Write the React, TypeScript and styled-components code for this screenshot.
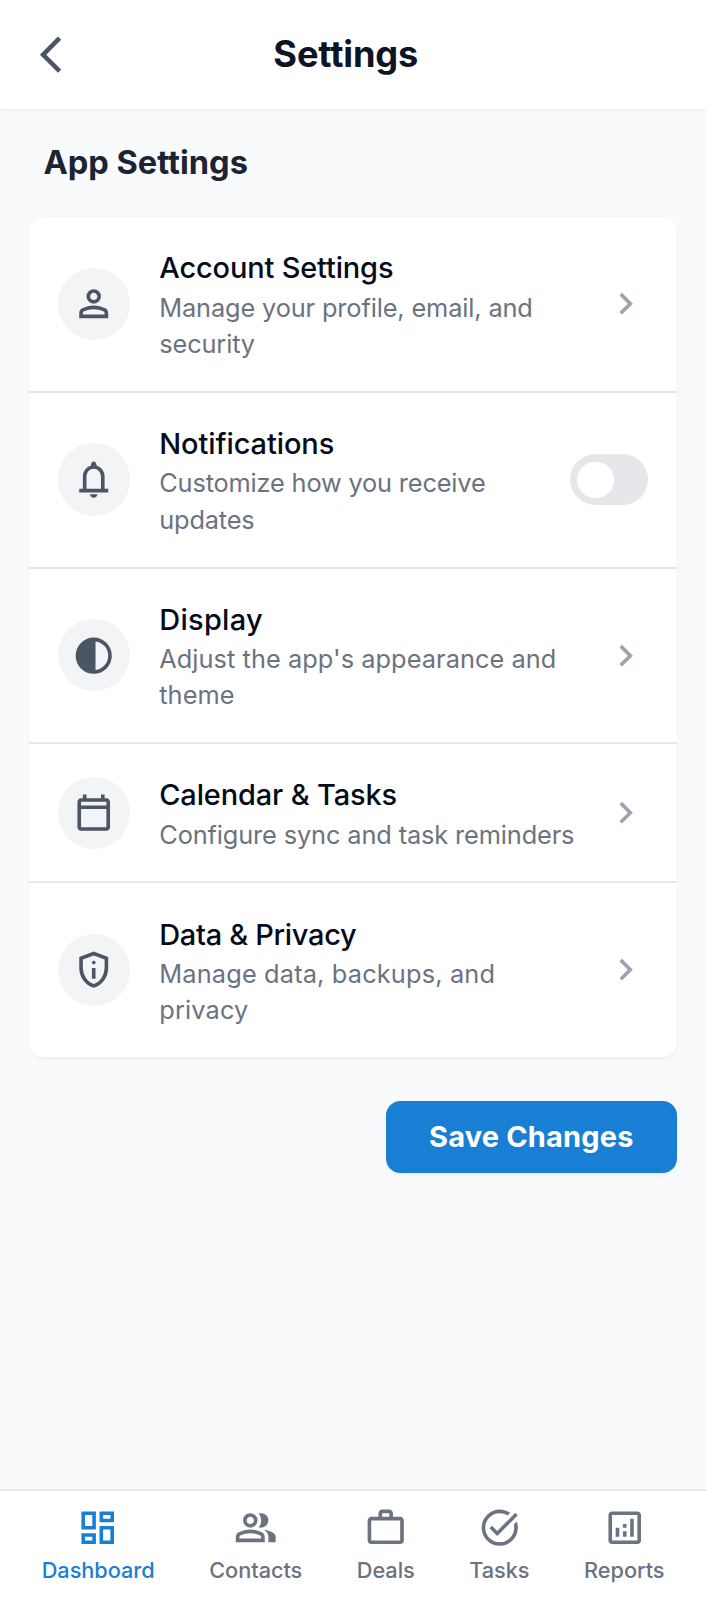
import React from "react";
import styled, { createGlobalStyle } from "styled-components";

const color = {
  primary: "#197fd4",
  page: "#f9fafb",
  surface: "#ffffff",
  line: "#e5e7eb",
  chip: "#f3f4f6",
  heading: "#0d1424",
  subheading: "#1a2433",
  rowTitle: "#060b1a",
  icon: "#4b5563",
  muted: "#6b7280",
  faint: "#9ca3af",
};

const GlobalStyle = createGlobalStyle`
  html { font-size: 28.964px; }
  *, *::before, *::after { box-sizing: border-box; }
  body {
    margin: 0;
    background: ${color.page};
    font-family: Inter, "Liberation Sans", sans-serif;
    font-optical-sizing: none;
  }
  h1, h2, p { margin: 0; }
  button { border: 0; padding: 0; background: none; font: inherit; cursor: pointer; }
`;

const icons = {
  back: "M640-80 240-480l400-400 71 71-329 329 329 329-71 71Z",
  chevron: "M504-480 320-664l56-56 240 240-240 240-56-56 184-184Z",
  person:
    "M480-480q-66 0-113-47t-47-113q0-66 47-113t113-47q66 0 113 47t47 113q0 66-47 113t-113 47ZM160-160v-112q0-34 17.5-62.5T224-378q62-31 126-46.5T480-440q66 0 130 15.5T736-378q29 15 46.5 43.5T800-272v112H160Zm80-80h480v-32q0-11-5.5-20T700-306q-54-27-109-40.5T480-360q-56 0-111 13.5T260-306q-9 5-14.5 14t-5.5 20v32Zm240-320q33 0 56.5-23.5T560-640q0-33-23.5-56.5T480-720q-33 0-56.5 23.5T400-640q0 33 23.5 56.5T480-560Z",
  bell:
    "M160-200v-80h80v-280q0-83 50-147.5T420-792v-28q0-25 17.5-42.5T480-880q25 0 42.5 17.5T540-820v28q80 20 130 84.5T720-560v280h80v80H160Zm320 120q-33 0-56.5-23.5T400-160h160q0 33-23.5 56.5T480-80ZM320-280h320v-280q0-66-47-113t-113-47q-66 0-113 47t-47 113v280Z",
  contrast:
    "M480-80q-83 0-156-31.5T197-197q-54-54-85.5-127T80-480q0-83 31.5-156T197-763q54-54 127-85.5T480-880q83 0 156 31.5T763-763q54 54 85.5 127T880-480q0 83-31.5 156T763-197q-54 54-127 85.5T480-80Zm40-83q119-15 199.5-104.5T800-480q0-123-80.5-212.5T520-797v634Z",
  calendar:
    "M200-80q-33 0-56.5-23.5T120-160v-560q0-33 23.5-56.5T200-800h40v-80h80v80h320v-80h80v80h40q33 0 56.5 23.5T840-720v560q0 33-23.5 56.5T760-80H200Zm0-80h560v-400H200v400Zm0-480h560v-80H200v80Z",
  shield:
    "M440-280h80v-240h-80v240Zm68.5-331.5Q520-623 520-640t-11.5-28.5Q497-680 480-680t-28.5 11.5Q440-657 440-640t11.5 28.5Q463-600 480-600t28.5-11.5ZM480-80q-139-35-229.5-159.5T160-516v-244l320-120 320 120v244q0 152-90.5 276.5T480-80Zm0-84q104-33 172-132t68-220v-189l-240-90-240 90v189q0 121 68 220t172 132Z",
  dashboard:
    "M520-600v-240h320v240H520ZM120-440v-400h320v400H120Zm400 320v-400h320v400H520Zm-400 0v-240h320v240H120Zm80-400h160v-240H200v240Zm400 320h160v-240H600v240Zm0-480h160v-80H600v80ZM200-200h160v-80H200v80Z",
  group:
    "M40-160v-112q0-34 17.5-62.5T104-378q62-31 126-46.5T360-440q66 0 130 15.5T616-378q29 15 46.5 43.5T680-272v112H40Zm720 0v-120q0-44-24.5-84.5T666-434q51 6 96 20.5t84 35.5q36 20 55 44.5t19 53.5v120H760ZM360-480q-66 0-113-47t-47-113q0-66 47-113t113-47q66 0 113 47t47 113q0 66-47 113t-113 47Zm400-160q0 66-47 113t-113 47q-11 0-28-2.5t-28-5.5q27-32 41.5-71t14.5-81q0-42-14.5-81T544-792q14-5 28-6.5t28-1.5q66 0 113 47t47 113ZM120-240h480v-32q0-11-5.5-20T580-306q-54-27-109-40.5T360-360q-56 0-111 13.5T140-306q-9 5-14.5 14t-5.5 20v32Zm240-320q33 0 56.5-23.5T440-640q0-33-23.5-56.5T360-720q-33 0-56.5 23.5T280-640q0 33 23.5 56.5T360-560Z",
  work:
    "M160-120q-33 0-56.5-23.5T80-200v-440q0-33 23.5-56.5T160-720h160v-80q0-33 23.5-56.5T400-880h160q33 0 56.5 23.5T640-800v80h160q33 0 56.5 23.5T880-640v440q0 33-23.5 56.5T800-120H160Zm0-80h640v-440H160v440Zm240-520h160v-80H400v80Z",
  task:
    "M480-80q-83 0-156-31.5T197-197q-54-54-85.5-127T80-480q0-83 31.5-156T197-763q54-54 127-85.5T480-880q65 0 123 19t107 53l-58 59q-38-24-81-37.5T480-800q-133 0-226.5 93.5T160-480q0 133 93.5 226.5T480-160q133 0 226.5-93.5T800-480q0-18-2-36t-6-35l65-65q11 32 17 66t6 70q0 83-31.5 156T763-197q-54 54-127 85.5T480-80Zm-56-216L254-466l56-56 114 114 400-401 56 56-456 457Z",
  analytics:
    "M280-280h80v-200h-80v200Zm320 0h80v-400h-80v400Zm-160 0h80v-120h-80v120Zm0-200h80v-80h-80v80ZM200-120q-33 0-56.5-23.5T120-200v-560q0-33 23.5-56.5T200-840h560q33 0 56.5 23.5T840-760v560q0 33-23.5 56.5T760-120H200Zm0-80h560v-560H200v560Z",
};

type IconName = keyof typeof icons;

const Glyph = styled.svg`
  display: block;
  flex: none;
  width: 1.5rem;
  height: 1.5rem;
  fill: currentColor;
`;

const Icon = ({ name }: { name: IconName }) => (
  <Glyph viewBox="0 -960 960 960" aria-hidden="true">
    <path d={icons[name]} />
  </Glyph>
);

const Screen = styled.div`
  display: flex;
  flex-direction: column;
  height: 100vh;
  overflow: hidden;
`;

const Header = styled.header`
  display: flex;
  align-items: center;
  padding: 1rem;
  background: ${color.surface};
  box-shadow: 0 0.0625rem 0.125rem rgba(0, 0, 0, 0.05);
`;

const BackButton = styled.button`
  color: ${color.icon};
`;

const Title = styled.h1`
  flex: 1;
  padding-right: 2rem;
  text-align: center;
  color: ${color.heading};
  font-size: 1.25rem;
  line-height: 1.75rem;
  font-weight: 700;
  letter-spacing: -0.004em;
`;

const Main = styled.main`
  flex: 1;
  padding: 0.985rem 1rem 1rem;
`;

const SectionTitle = styled.h2`
  padding: 0 0.5rem 1.015rem;
  color: ${color.subheading};
  font-size: 1.125rem;
  line-height: 1.75rem;
  font-weight: 700;
  letter-spacing: 0;
`;

const Card = styled.section`
  border-radius: 0.5rem;
  background: ${color.surface};
  box-shadow: 0 0.0625rem 0.125rem rgba(0, 0, 0, 0.05);
`;

const Divider = styled.div`
  height: 2px;
  margin-bottom: -0.19px;
  background: ${color.line};
`;

const Row = styled.div`
  display: flex;
  align-items: center;
  gap: 1rem;
  padding: 1rem;
`;

const IconChip = styled.span`
  display: flex;
  align-items: center;
  justify-content: center;
  flex: none;
  width: 2.5rem;
  height: 2.5rem;
  border-radius: 50%;
  background: ${color.chip};
  color: ${color.icon};
`;

const RowText = styled.div`
  flex: 1;
  min-width: 0;
  padding-top: 0.3px;
  margin-bottom: -0.3px;
`;

const RowTitle = styled.p<{ $tracking: number }>`
  color: ${color.rowTitle};
  font-size: 1rem;
  line-height: 1.5rem;
  font-weight: 500;
  letter-spacing: ${(p) => p.$tracking}px;
`;

const RowNote = styled.p<{ $tracking: number }>`
  color: ${color.muted};
  font-size: 0.875rem;
  line-height: 1.25rem;
  letter-spacing: ${(p) => p.$tracking}px;
`;

const RowArrow = styled.span`
  color: ${color.faint};
`;

const Toggle = styled.button<{ $on?: boolean }>`
  display: flex;
  align-items: center;
  justify-content: ${(p) => (p.$on ? "flex-end" : "flex-start")};
  flex: none;
  width: 78px;
  height: 1.75rem;
  padding: 0 0.25rem;
  border-radius: 999px;
  background: ${(p) => (p.$on ? color.primary : color.line)};
`;

const Knob = styled.span`
  width: 1.25rem;
  height: 1.25rem;
  border-radius: 50%;
  background: ${color.surface};
`;

const Actions = styled.div`
  display: flex;
  justify-content: flex-end;
  padding-top: 1.5rem;
`;

const SaveButton = styled.button`
  height: 2.5rem;
  padding: 0 1.5rem;
  border-radius: 0.5rem;
  background: ${color.primary};
  color: #fff;
  font-size: 1rem;
  line-height: 1.5rem;
  font-weight: 700;
  letter-spacing: 0.19px;
  box-shadow: 0 0.0625rem 0.125rem rgba(0, 0, 0, 0.05);
`;

const Nav = styled.nav`
  background: ${color.surface};
`;

const NavItems = styled.div`
  display: flex;
  justify-content: space-around;
  padding: 0.51rem 0.49rem 0.5rem 0.5rem;
`;

const NavItem = styled.a<{ $active?: boolean }>`
  display: flex;
  flex-direction: column;
  align-items: center;
  gap: 0.22rem;
  padding-bottom: 0.03rem;
  color: ${(p) => (p.$active ? color.primary : color.muted)};
  font-size: 0.75rem;
  line-height: 1rem;
  font-weight: 500;
  letter-spacing: -0.04px;
`;

type Setting = {
  icon: IconName;
  title: string;
  titleTracking: number;
  note: string;
  noteTracking: number;
  toggle?: boolean;
};

const rows: Setting[] = [
  {
    icon: "person",
    title: "Account Settings",
    titleTracking: -0.15,
    note: "Manage your profile, email, and security",
    noteTracking: -0.13,
  },
  {
    icon: "bell",
    title: "Notifications",
    titleTracking: -0.08,
    note: "Customize how you receive updates",
    noteTracking: -0.16,
    toggle: true,
  },
  {
    icon: "contrast",
    title: "Display",
    titleTracking: 0.28,
    note: "Adjust the app's appearance and theme",
    noteTracking: 0.06,
  },
  {
    icon: "calendar",
    title: "Calendar & Tasks",
    titleTracking: -0.13,
    note: "Configure sync and task reminders",
    noteTracking: -0.12,
  },
  {
    icon: "shield",
    title: "Data & Privacy",
    titleTracking: -0.3,
    note: "Manage data, backups, and privacy",
    noteTracking: 0.16,
  },
];

const tabs: { icon: IconName; label: string }[] = [
  { icon: "dashboard", label: "Dashboard" },
  { icon: "group", label: "Contacts" },
  { icon: "work", label: "Deals" },
  { icon: "task", label: "Tasks" },
  { icon: "analytics", label: "Reports" },
];

export default function App() {
  const [notify, setNotify] = React.useState(false);
  return (
    <Screen>
      <GlobalStyle />
      <Header>
        <BackButton aria-label="Back">
          <Icon name="back" />
        </BackButton>
        <Title>Settings</Title>
      </Header>
      <Main>
        <SectionTitle>App Settings</SectionTitle>
        <Card>
          {rows.map((row, i) => (
            <React.Fragment key={row.title}>
              {i > 0 && <Divider />}
              <Row>
                <IconChip>
                  <Icon name={row.icon} />
                </IconChip>
                <RowText>
                  <RowTitle $tracking={row.titleTracking}>{row.title}</RowTitle>
                  <RowNote $tracking={row.noteTracking}>{row.note}</RowNote>
                </RowText>
                {row.toggle ? (
                  <Toggle
                    role="switch"
                    aria-checked={notify}
                    aria-label={row.title}
                    $on={notify}
                    onClick={() => setNotify(!notify)}
                  >
                    <Knob />
                  </Toggle>
                ) : (
                  <RowArrow>
                    <Icon name="chevron" />
                  </RowArrow>
                )}
              </Row>
            </React.Fragment>
          ))}
        </Card>
        <Actions>
          <SaveButton>Save Changes</SaveButton>
        </Actions>
      </Main>
      <Nav>
        <Divider />
        <NavItems>
          {tabs.map((tab, i) => (
            <NavItem key={tab.label} $active={i === 0}>
              <Icon name={tab.icon} />
              {tab.label}
            </NavItem>
          ))}
        </NavItems>
      </Nav>
    </Screen>
  );
}
